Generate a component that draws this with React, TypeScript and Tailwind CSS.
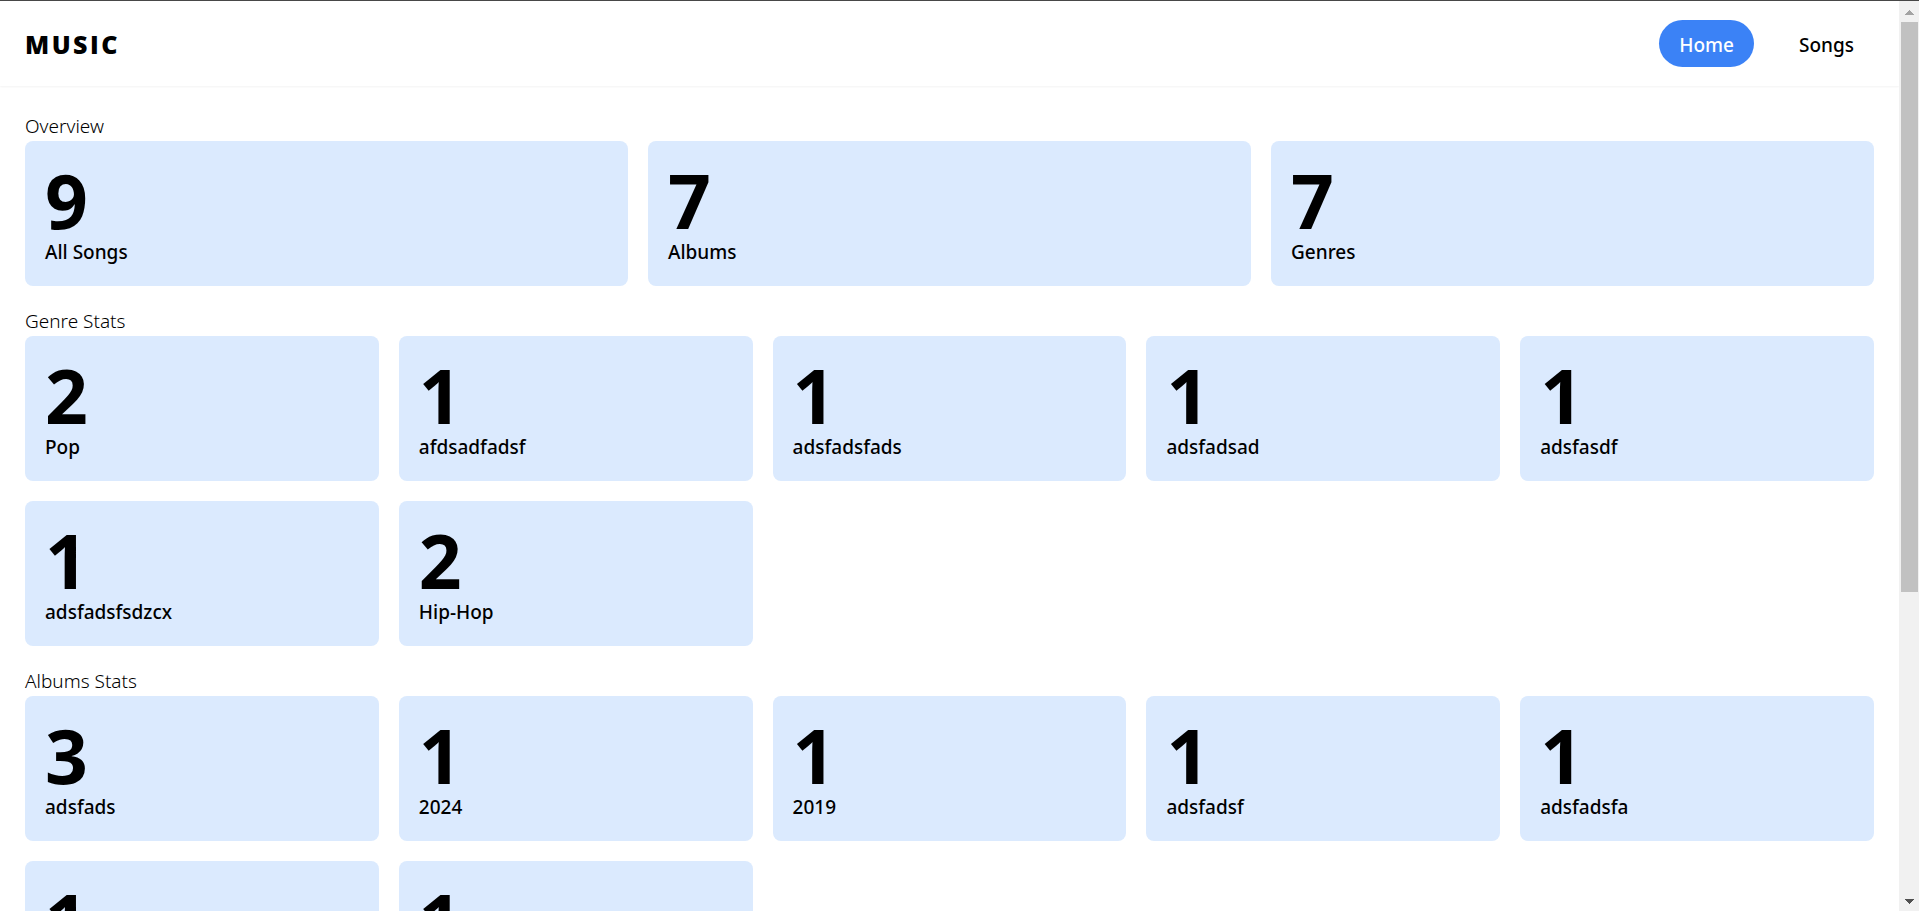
type Stat = { value: number; label: string };

const overview: Stat[] = [
  { value: 9, label: "All Songs" },
  { value: 7, label: "Albums" },
  { value: 7, label: "Genres" },
];

const genres: Stat[] = [
  { value: 2, label: "Pop" },
  { value: 1, label: "afdsadfadsf" },
  { value: 1, label: "adsfadsfads" },
  { value: 1, label: "adsfadsad" },
  { value: 1, label: "adsfasdf" },
  { value: 1, label: "adsfadsfsdzcx" },
  { value: 2, label: "Hip-Hop" },
];

const albums: Stat[] = [
  { value: 3, label: "adsfads" },
  { value: 1, label: "2024" },
  { value: 1, label: "2019" },
  { value: 1, label: "adsfadsf" },
  { value: 1, label: "adsfadsfa" },
  { value: 1, label: "" },
  { value: 1, label: "" },
];

function StatCard({ value, label }: Stat) {
  return (
    <article className="rounded-lg bg-[#dbeafe] px-5 pt-[22px] pb-5">
      <p className="text-[75px] leading-[75px] font-bold">{value}</p>
      <p className="h-7 text-[19px] leading-7 font-medium">{label}</p>
    </article>
  );
}

function Section({ title, stats, columns }: { title: string; stats: Stat[]; columns: string }) {
  return (
    <section>
      <h2 className="text-[19px] leading-[30px] font-light">{title}</h2>
      <div className={`grid gap-5 ${columns}`}>
        {stats.map((stat, i) => (
          <StatCard key={i} {...stat} />
        ))}
      </div>
    </section>
  );
}

function Scrollbar() {
  return (
    <div aria-hidden="true" className="flex w-5 shrink-0 flex-col bg-[#f1f1f1] pr-px pl-0.5">
      <div className="flex h-[21px] shrink-0 items-center justify-center pt-0.5">
        <svg width="9" height="5" viewBox="0 0 9 5" shapeRendering="crispEdges">
          <path d="M4 0h1v1h1v1h1v1h1v1h1v1H0V4h1V3h1V2h1V1h1z" fill="#a3a3a3" />
        </svg>
      </div>
      <div className="flex-[570] bg-[#c1c1c1]" />
      <div className="flex-[299]" />
      <div className="flex h-5 shrink-0 items-center justify-center">
        <svg width="9" height="5" viewBox="0 0 9 5" shapeRendering="crispEdges">
          <path d="M0 0h9v1H8v1H7v1H6v1H5v1H4V4H3V3H2V2H1V1H0z" fill="#505050" />
        </svg>
      </div>
    </div>
  );
}

export default function App() {
  return (
    <div className="flex h-screen overflow-hidden border-t border-[#474747] bg-white font-['Noto_Sans','Open_Sans',sans-serif] text-black">
      <div className="min-w-0 flex-1 overflow-hidden">
        <header className="flex h-[85px] items-center justify-between px-[25px] shadow-[0_1px_2px_0_rgba(0,0,0,0.05)]">
          <a href="#home" className="pt-0.5 font-['Open_Sans',sans-serif] text-[25px] leading-[35px] font-extrabold tracking-widest">
            MUSIC
          </a>
          <nav className="flex gap-[25px] text-[19px] leading-[31px] font-medium">
            <a href="#home" className="rounded-full bg-[#3b82f6] px-5 pt-2.5 pb-1.5 text-white">
              Home
            </a>
            <a href="#songs" className="rounded-full px-5 pt-2.5 pb-1.5">
              Songs
            </a>
          </nav>
        </header>
        <main className="flex flex-col gap-5 p-[25px]">
          <Section title="Overview" stats={overview} columns="grid-cols-3" />
          <Section title="Genre Stats" stats={genres} columns="grid-cols-5" />
          <Section title="Albums Stats" stats={albums} columns="grid-cols-5" />
        </main>
      </div>
      <Scrollbar />
    </div>
  );
}
